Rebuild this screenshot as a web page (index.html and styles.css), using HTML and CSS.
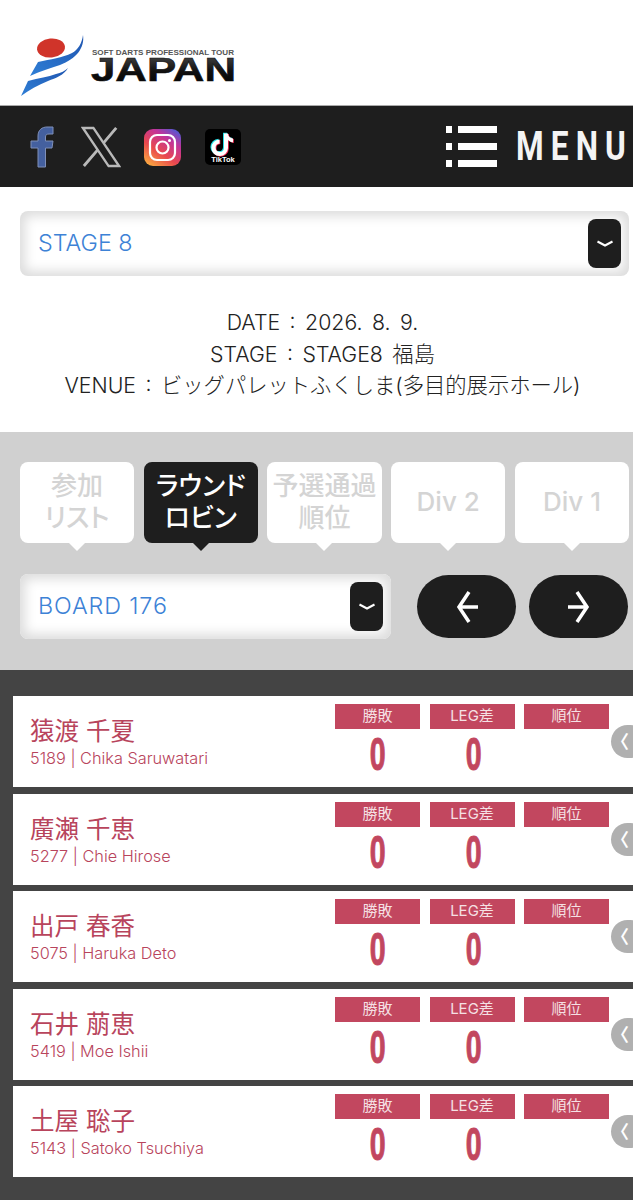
FILE: index.html
```html
<!DOCTYPE html>
<html lang="ja">
  <head>
    <meta charset="UTF-8" />
    <meta name="viewport" content="width=device-width, initial-scale=1.0" />
    <title>SOFT DARTS PROFESSIONAL TOUR JAPAN</title>
    <link rel="stylesheet" href="styles.css">
  </head>
  <body>
    <header class="site-header">
      <svg class="logo" width="230" height="70" viewBox="0 0 230 70">
        <defs>
          <linearGradient id="swoosh" x1="0" y1="1" x2="1" y2="0">
            <stop offset="0" stop-color="#2f7fd6" />
            <stop offset="1" stop-color="#1f55b0" />
          </linearGradient>
          <linearGradient id="japan" x1="0" y1="0" x2="0" y2="1">
            <stop offset="0" stop-color="#555" />
            <stop offset="0.55" stop-color="#111" />
            <stop offset="1" stop-color="#000" />
          </linearGradient>
        </defs>
        <ellipse cx="45" cy="14" rx="14" ry="9.5" fill="#d0342a" transform="rotate(-6 45 14)" />
        <path d="M77 1 C79 14 70 25 54 31 C45 34 35 37 24 42 L32 28 C45 25 56 24 66 19 C72 16 76 9 77 1 Z" fill="url(#swoosh)" />
        <path d="M62 34 C58 41 50 44 42 47 C32 51 23 56 15 62 L22 47 C33 44 42 43 50 40 C55 39 59 37 62 34 Z" fill="url(#swoosh)" />
        <text x="86" y="21" class="logo-tour" textLength="142" lengthAdjust="spacingAndGlyphs">SOFT DARTS PROFESSIONAL TOUR</text>
        <text x="85" y="47" class="logo-japan" fill="url(#japan)" textLength="145" lengthAdjust="spacingAndGlyphs">JAPAN</text>
      </svg>
    </header>

    <nav class="nav-bar">
      <div class="social">
        <svg class="icon-fb" width="26" height="42" viewBox="0 0 26 42">
          <path d="M9 41 V22 H2 V15 H9 V10 C9 4 13 1 18 1 H24 V8 H20 C17.500 8 16.500 9 16.500 11 V15 H24 L23 22 H16.500 V41 Z" fill="#44609f" stroke="#7f8fb8" stroke-width="1" />
        </svg>
        <svg class="icon-x" width="40" height="42" viewBox="0 0 42 42">
          <path d="M2 1 H13 L40 41 H29 Z" fill="none" stroke="#b9b9b9" stroke-width="2.500" />
          <path d="M37 1 L23.500 17 M17.500 24 L3 41" fill="none" stroke="#b9b9b9" stroke-width="3" />
        </svg>
        <svg class="icon-ig" width="37" height="37" viewBox="0 0 37 37">
          <defs>
            <linearGradient id="insta" x1="0.1" y1="1" x2="0.8" y2="0">
              <stop offset="0" stop-color="#fdb13f" />
              <stop offset="0.4" stop-color="#e9484e" />
              <stop offset="0.75" stop-color="#c2349a" />
              <stop offset="1" stop-color="#5a55d0" />
            </linearGradient>
          </defs>
          <rect width="37" height="37" rx="9" fill="url(#insta)" />
          <rect x="6" y="6" width="25" height="25" rx="7" fill="none" stroke="#fff" stroke-width="2.200" />
          <circle cx="18.500" cy="18.500" r="6" fill="none" stroke="#fff" stroke-width="2.200" />
          <circle cx="25.500" cy="11.500" r="1.500" fill="#fff" />
        </svg>
        <svg class="icon-tt" width="36" height="36" viewBox="0 0 36 36">
          <rect width="36" height="36" rx="5" fill="#000" />
          <path d="M19 4.500 V19 A4.200 4.200 0 1 1 14.500 14.500 V10.500 A8.300 8.300 0 1 0 23 19 V11 C24.500 12.500 26.500 13.300 28 13.300 V9.500 C25 9.300 23 7.500 23 4.500 Z" fill="#25e0e6" transform="translate(-1 -0.800)" />
          <path d="M19 4.500 V19 A4.200 4.200 0 1 1 14.500 14.500 V10.500 A8.300 8.300 0 1 0 23 19 V11 C24.500 12.500 26.500 13.300 28 13.300 V9.500 C25 9.300 23 7.500 23 4.500 Z" fill="#fb2c55" transform="translate(0.800 0.600)" />
          <path d="M19 4.500 V19 A4.200 4.200 0 1 1 14.500 14.500 V10.500 A8.300 8.300 0 1 0 23 19 V11 C24.500 12.500 26.500 13.300 28 13.300 V9.500 C25 9.300 23 7.500 23 4.500 Z" fill="#fff" />
          <text x="18" y="33" class="tt-label" text-anchor="middle">TikTok</text>
        </svg>
      </div>
      <div class="menu">
        <div class="menu-icon">
          <div class="menu-line"><i></i><b></b></div>
          <div class="menu-line"><i></i><b></b></div>
          <div class="menu-line"><i></i><b></b></div>
        </div>
        <span class="menu-text">MENU</span>
      </div>
    </nav>

    <section class="stage-info">
      <div class="select-box">
        <span class="select-text">STAGE 8</span>
        <span class="select-btn">
          <svg width="18" height="8" viewBox="0 0 18 8"><path d="M1.500 1.500 L9 5.500 L16.500 1.500" fill="none" stroke="#fff" stroke-width="2" /></svg>
        </span>
      </div>
      <div class="stage-text">
        <p>DATE : 2026. 8. 9.</p>
        <p>STAGE : STAGE8 福島</p>
        <p>VENUE : ビッグパレットふくしま(多目的展示ホール)</p>
      </div>
    </section>

    <section class="controls">
      <div class="tabs">
        <div class="tab">参加<br />リスト</div>
        <div class="tab active">ラウンド<br />ロビン</div>
        <div class="tab">予選通過<br />順位</div>
        <div class="tab">Div 2</div>
        <div class="tab">Div 1</div>
      </div>
      <div class="board-row">
        <div class="select-box board-select">
          <span class="select-text">BOARD 176</span>
          <span class="select-btn">
            <svg width="18" height="8" viewBox="0 0 18 8"><path d="M1.500 1.500 L9 5.500 L16.500 1.500" fill="none" stroke="#fff" stroke-width="2" /></svg>
          </span>
        </div>
        <div class="pager">
          <button class="pager-btn" aria-label="prev">
            <svg width="24" height="34" viewBox="0 0 24 34"><path d="M14 2 L4 17 L14 32 M4 17 H23" fill="none" stroke="#fff" stroke-width="3.500" /></svg>
          </button>
          <button class="pager-btn" aria-label="next">
            <svg width="24" height="34" viewBox="0 0 24 34"><path d="M10 2 L20 17 L10 32 M20 17 H1" fill="none" stroke="#fff" stroke-width="3.500" /></svg>
          </button>
        </div>
      </div>
    </section>

    <section class="players">
      <div class="player">
        <div class="player-name">
          <div class="name-ja">猿渡 千夏</div>
          <div class="name-en">5189 | Chika Saruwatari</div>
        </div>
        <div class="stats">
          <div class="stat"><div class="stat-head">勝敗</div><div class="stat-val"><span>0</span></div></div>
          <div class="stat"><div class="stat-head">LEG差</div><div class="stat-val"><span>0</span></div></div>
          <div class="stat"><div class="stat-head">順位</div><div class="stat-val"></div></div>
        </div>
        <span class="handle">〈</span>
      </div>
      <div class="player">
        <div class="player-name">
          <div class="name-ja">廣瀬 千恵</div>
          <div class="name-en">5277 | Chie Hirose</div>
        </div>
        <div class="stats">
          <div class="stat"><div class="stat-head">勝敗</div><div class="stat-val"><span>0</span></div></div>
          <div class="stat"><div class="stat-head">LEG差</div><div class="stat-val"><span>0</span></div></div>
          <div class="stat"><div class="stat-head">順位</div><div class="stat-val"></div></div>
        </div>
        <span class="handle">〈</span>
      </div>
      <div class="player">
        <div class="player-name">
          <div class="name-ja">出戸 春香</div>
          <div class="name-en">5075 | Haruka Deto</div>
        </div>
        <div class="stats">
          <div class="stat"><div class="stat-head">勝敗</div><div class="stat-val"><span>0</span></div></div>
          <div class="stat"><div class="stat-head">LEG差</div><div class="stat-val"><span>0</span></div></div>
          <div class="stat"><div class="stat-head">順位</div><div class="stat-val"></div></div>
        </div>
        <span class="handle">〈</span>
      </div>
      <div class="player">
        <div class="player-name">
          <div class="name-ja">石井 萠恵</div>
          <div class="name-en">5419 | Moe Ishii</div>
        </div>
        <div class="stats">
          <div class="stat"><div class="stat-head">勝敗</div><div class="stat-val"><span>0</span></div></div>
          <div class="stat"><div class="stat-head">LEG差</div><div class="stat-val"><span>0</span></div></div>
          <div class="stat"><div class="stat-head">順位</div><div class="stat-val"></div></div>
        </div>
        <span class="handle">〈</span>
      </div>
      <div class="player">
        <div class="player-name">
          <div class="name-ja">土屋 聡子</div>
          <div class="name-en">5143 | Satoko Tsuchiya</div>
        </div>
        <div class="stats">
          <div class="stat"><div class="stat-head">勝敗</div><div class="stat-val"><span>0</span></div></div>
          <div class="stat"><div class="stat-head">LEG差</div><div class="stat-val"><span>0</span></div></div>
          <div class="stat"><div class="stat-head">順位</div><div class="stat-val"></div></div>
        </div>
        <span class="handle">〈</span>
      </div>
    </section>
  </body>
</html>
```

FILE: styles.css
```css
* {
  box-sizing: border-box;
}
html,
body {
  overflow-x: hidden;
}
body {
  margin: 0;
  font-family: "Inter", "Noto Sans CJK JP", sans-serif;
  background-color: #444;
  color: #222;
}
p {
  margin: 0;
}

/* Header */
.site-header {
  height: 106px;
  padding: 34px 0 0 6px;
  background-color: #fff;
  border-bottom: 1px solid #aaa;
}
.logo {
  display: block;
}
.logo-tour {
  font-family: "Liberation Sans", sans-serif;
  font-size: 8px;
  font-weight: 700;
  fill: #555;
}
.logo-japan {
  font-family: "Liberation Sans", sans-serif;
  font-size: 34px;
  font-weight: 700;
  stroke: #111;
  stroke-width: 0.6px;
}

/* Black bar */
.nav-bar {
  display: flex;
  justify-content: space-between;
  align-items: center;
  height: 81px;
  background-color: #1e1e1e;
}
.social {
  display: flex;
  align-items: center;
  padding-left: 29px;
}
.icon-fb {
  margin-top: 1px;
}
.icon-x {
  margin-left: 26px;
}
.icon-ig {
  margin-left: 23px;
  margin-top: 1px;
}
.icon-tt {
  margin-left: 24px;
  margin-top: 1px;
}
.tt-label {
  font-family: "Liberation Sans", sans-serif;
  font-size: 7.500px;
  font-weight: 700;
  fill: #fff;
}
.menu {
  display: flex;
  align-items: center;
}
.menu-icon {
  display: flex;
  flex-direction: column;
  gap: 10.500px;
  width: 51px;
}
.menu-line {
  display: flex;
  gap: 6px;
}
.menu-line i {
  width: 6px;
  height: 6.500px;
  background-color: #fff;
}
.menu-line b {
  flex: 1;
  height: 6.500px;
  background-color: #fff;
}
.menu-text {
  width: 117px;
  margin-left: 19px;
  font-family: "Roboto", sans-serif;
  font-size: 40px;
  font-weight: 700;
  letter-spacing: 9px;
  color: #f4f4f4;
  line-height: 1;
  white-space: nowrap;
  transform: scaleX(0.79);
  transform-origin: left;
}

/* Stage select and info */
.stage-info {
  height: 245px;
  padding-top: 24px;
  background-color: #fff;
}
.select-box {
  display: flex;
  justify-content: space-between;
  align-items: center;
  height: 65px;
  margin: 0 4px 0 20px;
  padding: 0 8px 0 18px;
  background-color: #fff;
  border-radius: 8px;
  box-shadow: inset 0 0 12px 5px #dcdcdc;
}
.select-text {
  margin-bottom: 2px;
  font-size: 23.300px;
  font-weight: 300;
  color: #3d82d6;
}
.board-select .select-text {
  letter-spacing: 0.9px;
}
.select-btn {
  display: flex;
  justify-content: center;
  align-items: center;
  width: 33px;
  height: 49px;
  background-color: #1e1e1e;
  border-radius: 8px;
}
.stage-text {
  margin-top: 31px;
  padding-left: 12px;
  text-align: center;
  font-size: 21.300px;
  font-weight: 300;
  word-spacing: 3.500px;
  line-height: 31.500px;
}

/* Tabs */
.controls {
  height: 238px;
  padding: 30px 4px 0 20px;
  background-color: #d0d0d0;
}
.tabs {
  display: grid;
  grid-template-columns: repeat(5, 1fr);
  gap: 9.700px;
}
.tab {
  position: relative;
  display: flex;
  justify-content: center;
  align-items: center;
  height: 81px;
  padding-bottom: 2px;
  text-align: center;
  font-size: 26px;
  font-weight: 500;
  font-feature-settings: "palt";
  line-height: 32px;
  color: #d4d4d4;
  background-color: #fff;
  border-radius: 8px;
}
.tab::after {
  content: "";
  position: absolute;
  left: 50%;
  bottom: -8px;
  margin-left: -8px;
  border-top: 8px solid #fff;
  border-left: 8px solid transparent;
  border-right: 8px solid transparent;
}
.tab.active {
  color: #fff;
  background-color: #1e1e1e;
}
.tab.active::after {
  border-top-color: #1e1e1e;
}
.board-row {
  display: flex;
  justify-content: space-between;
  align-items: center;
  margin-top: 31px;
}
.board-select {
  width: 371px;
  margin: 0;
}
.pager {
  display: flex;
  gap: 13px;
  margin-right: 1px;
}
.pager-btn {
  display: flex;
  justify-content: center;
  align-items: center;
  width: 99px;
  height: 63px;
  padding: 0;
  background-color: #1e1e1e;
  border: none;
  border-radius: 32px;
}

/* Player list */
.players {
  display: flex;
  flex-direction: column;
  gap: 6.500px;
  padding: 26px 0 0 13px;
}
.player {
  position: relative;
  display: flex;
  justify-content: space-between;
  height: 91px;
  padding: 8px 24px 0 17px;
  background-color: #fff;
  color: #b8445c;
}
.player-name {
  padding-top: 11px;
}
.name-ja {
  font-size: 24.500px;
  line-height: 32px;
  font-weight: 400;
}
.name-en {
  margin-top: 1px;
  font-size: 16.300px;
  font-weight: 300;
  line-height: 20px;
  color: #b8445c;
}
.stats {
  display: grid;
  grid-template-columns: repeat(3, 85px);
  gap: 9.500px;
}
.stat-head {
  height: 25px;
  text-align: center;
  font-size: 15px;
  line-height: 24px;
  color: #f5e0e4;
  background-color: #c2475f;
}
.stat-val {
  margin-top: 2px;
  text-align: center;
  font-family: "Liberation Sans", sans-serif;
  font-size: 46px;
  font-weight: 700;
  line-height: 46px;
  color: #c2475f;
}
.stat-val span {
  display: inline-block;
  transform: scaleX(0.62);
  -webkit-text-stroke: 1px #c2475f;
}
.stat:nth-child(2) .stat-val span {
  margin-left: 3px;
}
.handle {
  position: absolute;
  top: 29px;
  right: -14px;
  width: 36px;
  height: 33px;
  font-size: 18px;
  font-weight: 700;
  line-height: 33px;
  color: #fff;
  background-color: #b0b0b0;
  border-radius: 17px;
}
```
